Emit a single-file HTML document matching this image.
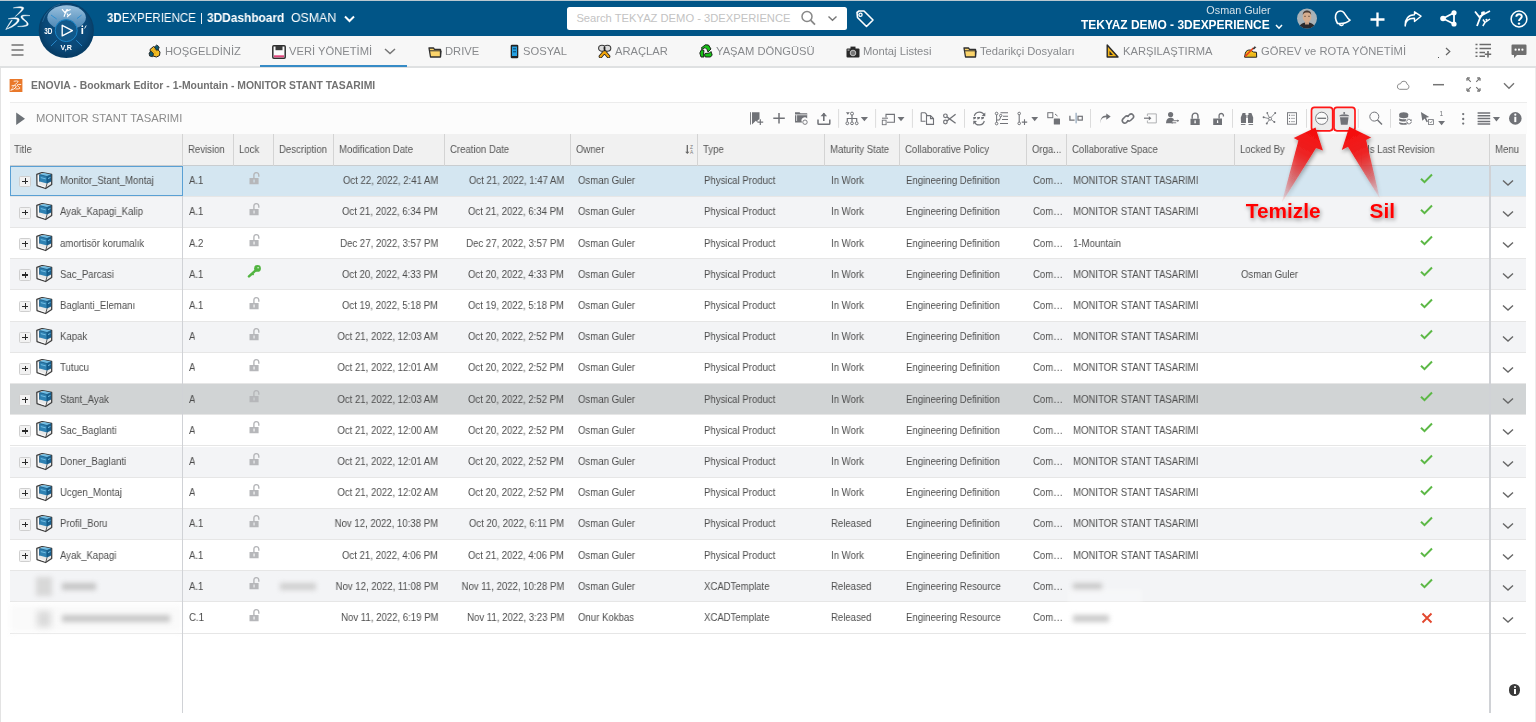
<!DOCTYPE html>
<html><head><meta charset="utf-8">
<style>
*{box-sizing:border-box}
html,body{margin:0;padding:0}
body{width:1536px;height:722px;overflow:hidden;position:relative;background:#fff;font-family:"Liberation Sans",sans-serif;}
.abs{position:absolute}
.brand{will-change:transform;top:9.4px;font-size:13px;color:#fff;white-space:nowrap;transform-origin:0 0}
#top{position:absolute;left:0;top:0;width:1536px;height:36px;background:#015587;border-top:1px solid #bac8d0}
#nav{position:absolute;left:0;top:36px;width:1536px;height:32px;background:#f7f7f7;border-bottom:2px solid #dfe1e2}
.nt{position:absolute;top:0;height:30px;line-height:30px;font-size:11.2px;color:#87898c;white-space:nowrap;will-change:transform}
.ni{position:absolute}
#panel{position:absolute;left:0;top:68px;width:1536px;height:654px;background:#fff;border-left:1.5px solid #e3e3e3}
#ptitle{will-change:transform;position:absolute;left:30px;top:11.6px;font-size:10.4px;font-weight:bold;color:#727272;white-space:nowrap}
#tb{position:absolute;left:9.6px;top:102px;width:1517px;height:31.5px;background:#fcfcfc;border-top:1px solid #ececec}
#tbtitle{will-change:transform;position:absolute;left:26.3px;top:9px;font-size:11.2px;color:#8c8c8c;white-space:nowrap}
#thead{position:absolute;left:9.6px;top:134.1px;width:1516.8px;height:31.6px;background:#f1f1f1;border-bottom:1px solid #c9cdd0}
.th{position:absolute;top:0;height:31.5px;border-left:1px solid #d4d4d4}
.th:first-child{border-left:none}
.th span{will-change:transform;position:absolute;left:4.9px;top:9.8px;font-size:10.4px;transform:scaleX(0.923);transform-origin:0 0;color:#555;white-space:nowrap}
.row{position:absolute;left:9.6px;width:1516.8px;height:31.2px;border-bottom:1px solid #e6e6e6}
.row .in{position:absolute;left:-9.6px;top:0;width:1536px;height:31.2px}
.row .c{position:absolute;top:9.5px;font-size:10.4px;color:#4d4d4d;white-space:nowrap;will-change:transform;transform:scaleX(0.923);transform-origin:0 0}
.row .c.r{transform-origin:100% 0}
.row .c.r{left:auto}
.row .ico{position:absolute}
.row .ico svg{display:block}
.row .blur{position:absolute}
.plus{position:absolute;width:11.3px;height:11.6px;background:#f2f2f2;border:1px solid #cfcfcf;border-radius:1.5px}
.plus:before{content:"";position:absolute;left:1.6px;top:3.9px;width:6.3px;height:1.25px;background:#2a2a2a}
.plus:after{content:"";position:absolute;left:4.15px;top:1.5px;width:1.25px;height:5.9px;background:#2a2a2a}
</style></head><body>
<div id="top">
  <svg class="abs" style="left:0;top:-2px" width="36" height="36" viewBox="0 0 36 36">
    <g fill="#fff" stroke="#fff" stroke-width="0.45" stroke-linejoin="round">
    <path d="M13.3 8.9 Q21.5 6.6 23.6 8.6 Q25 10.4 15.2 17.6 Q22 10.8 21.8 9.5 Q21 8.4 13.3 8.9 Z"/>
    <path d="M8.2 19.8 Q16.8 17.6 19 19.8 Q20.2 21.8 16.3 25.3 Q12.2 28.9 5.8 30.4 Q11.8 27.6 15 24.6 Q17.8 21.8 17.3 20.7 Q16.5 19.4 8.2 19.8 Z"/>
    <path d="M12.3 21.2 Q9.4 25.8 5.9 30.3 Q8.4 25.6 11.2 21.4 Z"/>
    <path d="M30 16.6 Q22.8 15.4 21.1 17 Q20 18.8 24.1 21.5 Q27.6 23.9 26.8 25.4 Q25.4 26.9 17.6 27.5 Q25.8 28 27.9 26.3 Q29.5 24.6 25.4 21.2 Q22 18.6 22.6 17.6 Q23.6 16.4 30 16.6 Z"/>
    </g>
  </svg>
  <div class="abs brand" style="left:107px;transform:scaleX(0.885)"><b>3D</b>EXPERIENCE</div>
  <div class="abs" style="left:201.2px;top:11.8px;width:1.1px;height:11.5px;background:#e8eef3"></div>
  <div class="abs brand" style="left:206.8px;transform:scaleX(0.915)"><b>3DDashboard</b></div>
  <div class="abs brand" style="left:291px;transform:scaleX(0.95)">OSMAN</div>
  <svg class="abs" style="left:344px;top:14px" width="11" height="8" viewBox="0 0 11 8"><path d="M1 1.5 L5.5 6 L10 1.5" fill="none" stroke="#fff" stroke-width="2"/></svg>
  <div class="abs" style="left:567.3px;top:5.6px;width:279.7px;height:23.3px;background:#fff;border-radius:2.5px"></div>
  <div class="abs" style="left:576.4px;top:11px;font-size:11.2px;color:#c3c3c3;white-space:nowrap">Search TEKYAZ DEMO - 3DEXPERIENCE</div>
  <svg class="abs" style="left:800px;top:9px" width="18" height="16" viewBox="0 0 18 16"><circle cx="7" cy="6.5" r="5" fill="none" stroke="#888" stroke-width="1.5"/><path d="M10.6 10.2 L15 14.6" stroke="#888" stroke-width="1.8"/></svg>
  <svg class="abs" style="left:827px;top:14px" width="11" height="7" viewBox="0 0 11 7"><path d="M1.5 1.5 L5.5 5.2 L9.5 1.5" fill="none" stroke="#777" stroke-width="1.4"/></svg>
  <svg class="abs" style="left:855px;top:9px" width="20" height="18" viewBox="0 0 20 18"><path d="M2 2.5 L2.5 7.5 L11.5 16.5 L18 10 L9 1 L4 1 Z" fill="none" stroke="#fff" stroke-width="1.6" stroke-linejoin="round"/><circle cx="5.5" cy="4.8" r="1.6" fill="none" stroke="#fff" stroke-width="1.3"/></svg>
  <div class="abs" style="right:265.4px;top:4.1px;font-size:10.2px;color:#d6e2ea;white-space:nowrap;transform-origin:100% 0;transform:scaleX(1.06)">Osman Guler</div>
  <div class="abs" style="left:1081px;top:16.9px;font-size:12.6px;font-weight:bold;color:#fff;white-space:nowrap;transform-origin:0 0;transform:scaleX(0.948)" id="tenant">TEKYAZ DEMO - 3DEXPERIENCE</div>
  <svg class="abs" style="left:1274.5px;top:23px" width="8" height="6" viewBox="0 0 8 6"><path d="M1 1 L4 4.2 L7 1" fill="none" stroke="#fff" stroke-width="1.5"/></svg>
  <svg class="abs" style="left:1296px;top:7px" width="22" height="22" viewBox="0 0 22 22"><defs><clipPath id="avc"><circle cx="11" cy="10.6" r="10"/></clipPath><filter id="avb"><feGaussianBlur stdDeviation="0.6"/></filter></defs><g clip-path="url(#avc)"><rect x="0" y="0" width="22" height="22" fill="#a8b2b8"/><g filter="url(#avb)"><path d="M2 22 C3 16 7 14.5 11 14.5 C15 14.5 19 16 20 22 Z" fill="#2a2b2d"/><rect x="9" y="12.5" width="4" height="4" fill="#c9a186"/><ellipse cx="11" cy="8.8" rx="4.3" ry="5.6" fill="#d6ad8e"/><path d="M6.8 7 C6.8 3.5 9 2.6 11 2.6 C13 2.6 15.2 3.5 15.2 7 C14.5 5.2 13 4.6 11 4.6 C9 4.6 7.5 5.2 6.8 7 Z" fill="#4a3a32"/><path d="M8 8.3 H10 M12 8.3 H14" stroke="#6a5040" stroke-width="0.8"/></g></g></svg>
  <svg class="abs" style="left:1333px;top:8px" width="19" height="19" viewBox="0 0 19 19"><path d="M4.5 14.5 C2.5 11 1.8 7 3.5 4.2 C5.2 1.5 9 1.2 11 3.8 C12.8 6.2 14 9 17 11.2 C14.5 13.5 9 15 4.5 14.5 Z" fill="none" stroke="#fff" stroke-width="1.6" stroke-linejoin="round"/><path d="M6.5 15 C7 17 9.5 17.3 10.5 15.3" fill="none" stroke="#fff" stroke-width="1.4"/></svg>
  <svg class="abs" style="left:1370px;top:10.5px" width="15" height="15" viewBox="0 0 15 15"><path d="M7.5 0.5 V14.5 M0.5 7.5 H14.5" stroke="#fff" stroke-width="2.3"/></svg>
  <svg class="abs" style="left:1403.5px;top:9.8px" width="18" height="16" viewBox="0 0 18 16"><path d="M1.2 15 C1.5 9.5 5 7 10.5 7.2 V10.5 L17 5.2 L10.5 0.8 V3.8 C4.5 3.8 0.8 8 1.2 15 Z" fill="none" stroke="#fff" stroke-width="1.4" stroke-linejoin="round"/></svg>
  <svg class="abs" style="left:1439.5px;top:9.2px" width="18" height="17" viewBox="0 0 18 17"><path d="M3 8.5 L14 2.8 L14 14 Z" fill="none" stroke="#fff" stroke-width="1.8" stroke-linejoin="round"/><circle cx="3" cy="8.5" r="2.8" fill="#fff"/><circle cx="14" cy="2.8" r="2.6" fill="#fff"/><circle cx="14" cy="14" r="2.6" fill="#fff"/></svg>
  <svg class="abs" style="left:1474px;top:9.2px" width="18" height="17" viewBox="0 0 18 17"><path d="M1 1.5 L6 8 L3 16" fill="none" stroke="#fff" stroke-width="1.8"/><path d="M6 8 L10.5 1.5" fill="none" stroke="#fff" stroke-width="1.8"/><path d="M5.5 6.5 L16 1" fill="none" stroke="#fff" stroke-width="1.6"/><circle cx="8.5" cy="3" r="1.5" fill="#fff"/><path d="M9 9.5 L11 12.5 L8.8 16 M11 12.5 L16 9" fill="none" stroke="#fff" stroke-width="1.5"/><circle cx="12.5" cy="9.8" r="1.1" fill="#fff"/></svg>
  <svg class="abs" style="left:1509.5px;top:8.5px" width="18" height="18" viewBox="0 0 18 18"><circle cx="9" cy="9" r="7.9" fill="none" stroke="#fff" stroke-width="1.5"/><path d="M6.3 6.8 C6.3 3.5 11.8 3.5 11.8 6.6 C11.8 8.6 9 8.8 9 11" fill="none" stroke="#fff" stroke-width="1.9"/><circle cx="9" cy="13.6" r="1.2" fill="#fff"/></svg>
</div>
<svg id="compass" class="abs" style="left:0;top:0;z-index:5" width="100" height="64" viewBox="0 0 100 64">
  <defs>
    <radialGradient id="cdisc" cx="0.5" cy="0.45" r="0.55"><stop offset="0" stop-color="#0c5184"/><stop offset="0.75" stop-color="#0a4877"/><stop offset="1" stop-color="#063b63"/></radialGradient>
    <linearGradient id="ccap" x1="0" y1="0" x2="0" y2="1"><stop offset="0" stop-color="#a2c8e4"/><stop offset="0.6" stop-color="#6a9fc8"/><stop offset="1" stop-color="#4f86b2"/></linearGradient>
  </defs>
  <circle cx="66.3" cy="30.4" r="27.6" fill="#083f68"/>
  <circle cx="66.3" cy="30.4" r="26.6" fill="url(#cdisc)"/>
  <path d="M42.5 22 A24 24 0 0 1 60 4.2" fill="none" stroke="#2f77a8" stroke-width="0.8" opacity="0.8"/>
  <ellipse cx="66.6" cy="17.6" rx="19.3" ry="12.3" fill="url(#ccap)" opacity="0.95"/>
  <circle cx="66.2" cy="30.6" r="11" fill="#11588a" stroke="#1c87c9" stroke-width="1"/>
  <path d="M62.2 25.3 L62.2 35.9 L72.4 30.6 Z" fill="none" stroke="#fff" stroke-width="1.35" stroke-linejoin="round"/>
  <path d="M51 15 L56.7 19 M81.6 15 L77 18.6 M51 46 L56.7 40.3 M82 46 L76.2 40.3" stroke="#2a8cd0" stroke-width="0.9"/>
  <text x="44.2" y="33.8" font-family="Liberation Sans" font-weight="bold" font-size="8.4" fill="#fff" textLength="8.2" lengthAdjust="spacingAndGlyphs">3D</text>
  <text x="60.6" y="50.2" font-family="Liberation Sans" font-weight="bold" font-size="8" fill="#fff" textLength="11.2" lengthAdjust="spacingAndGlyphs">V,R</text>
  <path d="M82.3 28 V34" stroke="#fff" stroke-width="1.7"/>
  <circle cx="82.3" cy="26.2" r="0.9" fill="#fff"/>
  <path d="M84.6 28.5 L86.2 25.5" stroke="#fff" stroke-width="0.9"/>
  <path d="M62 9.2 L65.3 13.2 L64 16.8 M65.3 13.2 L67.8 9.2 M64.6 12 L70.6 9.5 M67 13.5 L68.3 15.8 L67.2 17.2 M68.3 15.8 L71 13.6" fill="none" stroke="#fff" stroke-width="1.15"/>
  <circle cx="66.6" cy="10.3" r="1" fill="#fff"/>
</svg>
<div id="nav">
  <svg class="abs" style="left:11px;top:8px" width="13" height="12" viewBox="0 0 13 12"><path d="M0.5 1 H12.5 M0.5 6 H12.5 M0.5 11 H12.5" stroke="#747474" stroke-width="1.7"/></svg>
  <svg class="ni" style="left:144px;top:4px" width="22" height="22" viewBox="144 40 22 22"><path d="M150 49.5 L153.5 46.5 L157 48.5 L160 52 L159.5 55.5 L156.5 57 L153 56 L150.5 52.5 Z" fill="#f4bd22" stroke="#1e1e1e" stroke-width="1" stroke-linejoin="round"/><path d="M154.5 47 L156.8 44.9 L159.2 47 L158.2 50 L156.3 50.2 Z" fill="#0f5a6e" stroke="#1e1e1e" stroke-width="0.8"/><path d="M149 53 L151.3 51.2 L153.6 53.8 L152.4 56.8 L149.6 56 Z" fill="#0f5a6e" stroke="#1e1e1e" stroke-width="0.8"/><path d="M152 50 L156 53.5 M153.5 48.5 L157.5 52" stroke="#c98f10" stroke-width="0.6"/></svg>
  <div class="nt" style="left:165.2px">HOŞGELDİNİZ</div>
  <svg class="ni" style="left:271.8px;top:8.5px" width="14" height="14" viewBox="0 0 14 14"><rect x="0.8" y="0.8" width="12.4" height="12.4" rx="1" fill="#fafafa" stroke="#2f2f2f" stroke-width="1.5"/><rect x="3.5" y="1" width="7" height="4.2" fill="#3a3a3a"/><rect x="2" y="10.3" width="10" height="2" fill="#e0457b"/></svg>
  <div class="nt" style="left:288.9px">VERİ YÖNETİMİ</div>
  <svg class="ni" style="left:384px;top:12px" width="12" height="7" viewBox="0 0 12 7"><path d="M1 1 L6 5.5 L11 1" fill="none" stroke="#777" stroke-width="1.5"/></svg>
  <div class="abs" style="left:260.2px;top:28.5px;width:146.6px;height:2.2px;background:#368bc6"></div>
  <svg class="ni" style="left:427.5px;top:9.5px" width="14" height="12" viewBox="0 0 14 12"><path d="M1 2 L5.5 2 L6.5 3.3 L12.5 3.3 L12.5 11 L2.5 11 Z" fill="#fbd46b" stroke="#2f2f2f" stroke-width="1.3" stroke-linejoin="round"/><path d="M1 4.8 H13.2 L12.5 11" fill="none" stroke="#2f2f2f" stroke-width="1"/></svg>
  <div class="nt" style="left:444.6px">DRIVE</div>
  <svg class="ni" style="left:509.5px;top:7.5px" width="9" height="15" viewBox="0 0 9 15"><rect x="0.7" y="0.7" width="7.6" height="13.6" rx="1.3" fill="#222"/><rect x="2" y="2.5" width="5" height="9.5" fill="#27a0e0"/><rect x="3" y="4" width="3" height="1.4" fill="#0e5f8f"/><rect x="3" y="7" width="3" height="1.4" fill="#0e5f8f"/></svg>
  <div class="nt" style="left:522.9px">SOSYAL</div>
  <svg class="ni" style="left:596px;top:6px" width="18" height="16" viewBox="0 0 18 16"><path d="M4.5 14.5 L10.5 7.5 M12.5 14.5 L6.5 7.5" stroke="#1e1e1e" stroke-width="3.6" stroke-linecap="round"/><path d="M4.5 14.5 L10.5 7.5 M12.5 14.5 L6.5 7.5" stroke="#f0a30a" stroke-width="2.1" stroke-linecap="round"/><ellipse cx="6" cy="6.2" rx="3.4" ry="3" fill="#dcdcdc" stroke="#3a3a3a" stroke-width="1.1"/><ellipse cx="11.4" cy="6.2" rx="3.4" ry="3" fill="#dcdcdc" stroke="#3a3a3a" stroke-width="1.1"/><path d="M8.7 5 V9" stroke="#1e1e1e" stroke-width="1.4"/></svg>
  <div class="nt" style="left:615px">ARAÇLAR</div>
  <svg class="ni" style="left:699px;top:8px" width="14" height="14" viewBox="0 0 14 14"><path d="M6.3 0.8 L9.5 1 L12 5 L9 8 L8 5.5 L6 3.5 L3.8 5.2 L2.2 4 Z" fill="#16c216" stroke="#111" stroke-width="0.9" stroke-linejoin="round"/><path d="M0.8 9 L2.5 5.5 L5 6.5 L4.5 10 L5 13 L2 13 Z" fill="#16c216" stroke="#111" stroke-width="0.9" stroke-linejoin="round"/><path d="M6 9.5 L10.5 9 L12 7.5 L13.2 11 L11.5 13 L6.3 13 L5.5 11 Z" fill="#16c216" stroke="#111" stroke-width="0.9" stroke-linejoin="round"/></svg>
  <div class="nt" style="left:715.6px">YAŞAM DÖNGÜSÜ</div>
  <svg class="ni" style="left:845.5px;top:9.5px" width="14" height="12" viewBox="0 0 14 12"><rect x="0.5" y="2.5" width="13" height="9" rx="1" fill="#2a2a2a"/><rect x="4.5" y="0.6" width="5" height="2.4" fill="#2a2a2a"/><circle cx="7" cy="7" r="2.8" fill="#777" stroke="#ddd" stroke-width="0.8"/><rect x="1.5" y="3.5" width="2" height="1.2" fill="#aaa"/></svg>
  <div class="nt" style="left:863.3px">Montaj Listesi</div>
  <svg class="ni" style="left:962.5px;top:9.5px" width="14" height="12" viewBox="0 0 14 12"><path d="M1 2 L5.5 2 L6.5 3.3 L12.5 3.3 L12.5 11 L2.5 11 Z" fill="#fbd46b" stroke="#2f2f2f" stroke-width="1.3" stroke-linejoin="round"/><path d="M1 4.8 H13.2 L12.5 11" fill="none" stroke="#2f2f2f" stroke-width="1"/></svg>
  <div class="nt" style="left:980.2px">Tedarikçi Dosyaları</div>
  <svg class="ni" style="left:1105.5px;top:8px" width="13" height="14" viewBox="0 0 13 14"><path d="M1.2 1 L12 13 L1.2 13 Z" fill="#f2b418" stroke="#2a2a2a" stroke-width="1.4" stroke-linejoin="round"/><path d="M3.5 7 L7 11 L3.5 11 Z" fill="#2a2a2a"/></svg>
  <div class="nt" style="left:1122.6px">KARŞILAŞTIRMA</div>
  <svg class="ni" style="left:1240px;top:4px" width="22" height="22" viewBox="1240 40 22 22"><path d="M1244.6 57.2 L1245.3 53.2 C1246 50.6 1248 49.8 1250.5 50 L1253.5 52 L1256.5 52.3 L1256.7 57.2 Z" fill="#f5c21f" stroke="#1e1e1e" stroke-width="1" stroke-linejoin="round"/><path d="M1245.2 56.4 L1253.4 48" stroke="#e8421a" stroke-width="1.7"/><path d="M1253 48.4 L1255 46.6 L1255.8 47.4 L1253.8 49.2 Z" fill="#333" stroke="#222" stroke-width="0.6"/><path d="M1248.5 55 H1255.5" stroke="#d9a010" stroke-width="0.6"/></svg>
  <div class="nt" style="left:1261.4px">GÖREV ve ROTA YÖNETİMİ</div>
  <div class="abs" style="left:1437.8px;top:20.5px;width:1.6px;height:1.6px;background:#555"></div>
  <svg class="ni" style="left:1445px;top:11px" width="6" height="9" viewBox="0 0 6 9"><path d="M1 1 L4.8 4.5 L1 8" fill="none" stroke="#666" stroke-width="1.2"/></svg>
  <svg class="ni" style="left:1475px;top:6.5px" width="17" height="15" viewBox="0 0 17 15"><path d="M0.5 1.5 H2.5 M4.5 1.5 H16 M0.5 5.5 H2.5 M4.5 5.5 H16 M0.5 9.5 H2.5 M4.5 9.5 H10 M0.5 13.2 H2.5 M4.5 13.2 H10 M13 8 V14.5 M9.8 11.2 H16.2" stroke="#6b6b6b" stroke-width="1.6"/></svg>
  <svg class="ni" style="left:1511px;top:7.5px" width="16" height="15" viewBox="0 0 16 15"><path d="M1.5 0.5 H14.5 A1 1 0 0 1 15.5 1.5 V10 A1 1 0 0 1 14.5 11 H6 L3 14 V11 H1.5 A1 1 0 0 1 0.5 10 V1.5 A1 1 0 0 1 1.5 0.5 Z" fill="#6f6f6f"/><circle cx="4.6" cy="5.7" r="1.1" fill="#fff"/><circle cx="8" cy="5.7" r="1.1" fill="#fff"/><circle cx="11.4" cy="5.7" r="1.1" fill="#fff"/></svg>
</div>
<div id="panel">
  <div id="ptitle">ENOVIA - Bookmark Editor - 1-Mountain - MONITOR STANT TASARIMI</div>
</div>
<div id="tb"><div id="tbtitle">MONITOR STANT TASARIMI</div></div>
<svg class="abs" style="left:0;top:66px;z-index:2" width="1536" height="70" viewBox="0 66 1536 70">
<g fill="none" stroke="#707277">
  <!-- panel header right icons -->
  <path d="M1399.5 89.3 H1407 A2.6 2.6 0 0 0 1407.2 84.3 A3.4 3.4 0 0 0 1400.5 83.8 A2.8 2.8 0 0 0 1399.5 89.3 Z" stroke="#8c8c8c" stroke-width="1"/>
  <path d="M1433 84.7 H1444" stroke-width="1.5" stroke="#747474"/>
  <path d="M1467.5 78.5 L1470.8 81.8 M1479.5 78.5 L1476.2 81.8 M1467.5 90.5 L1470.8 87.2 M1479.5 90.5 L1476.2 87.2" stroke-width="1.1" stroke="#747474"/>
  <path d="M1467 78 h2.8 M1467 78 v2.8 M1480 78 h-2.8 M1480 78 v2.8 M1467 91 h2.8 M1467 91 v-2.8 M1480 91 h-2.8 M1480 91 v-2.8" stroke-width="1.3" stroke="#747474"/>
  <path d="M1504 83.3 L1509 88.3 L1514 83.3" stroke-width="1.4" stroke="#747474"/>
</g>
<!-- orange logo -->
<rect x="9.6" y="79" width="12.8" height="13" fill="#e9782a"/>
<g transform="translate(10.6 80.2) scale(0.42) translate(-5.3 -6.2)" fill="none" stroke="#fff" stroke-linecap="round">
    <path d="M13.6 8.6 Q21.5 7.2 23.2 8.9 Q24.4 10.5 14.9 17.3" stroke-width="1.9"/>
    <path d="M8.5 19.4 Q16.5 18.2 18.5 20 Q19.6 21.6 16 25 Q12 28.6 6.3 30" stroke-width="2.1"/>
    <path d="M11.9 21.3 Q9.2 25.6 6.4 29.8" stroke-width="1.3"/>
    <path d="M29.6 16.3 Q22.5 15.8 21 17.3 Q20.2 18.8 24.2 21.3 Q28.3 24 26.9 25.9 Q25.2 27.3 17.8 27.2" stroke-width="2"/>
</g>
<!-- toolbar triangle -->
<path d="M16.2 112.6 L25 118.75 L16.2 124.9 Z" fill="#6d7277"/>
<!-- separators -->
<g stroke="#dcdcdc" stroke-width="1">
<path d="M838.6 109 V127.8 M875.6 109 V127.8 M912.4 109 V127.8 M964.5 109 V127.8 M1090.5 109 V127.8 M1232.5 109 V127.8 M1306.5 109 V127.8 M1358.3 109 V127.8 M1390.5 109 V127.8"/>
</g>
<g fill="#707277" stroke="none">
  <!-- bookmark + -->
  <rect x="750.1" y="112.2" width="0.9" height="12.4"/>
  <path d="M752 112.2 H759.5 V119 L757.5 120.5 V122.5 L755.8 120.7 L752 124.6 Z"/>
  <path d="M760.3 119.2 V125 M757.5 122.1 H763.2" stroke="#707277" stroke-width="1.2"/>
  <!-- plus -->
  <path d="M779 113 V123.6 M773.3 118.3 H784.8" stroke="#707277" stroke-width="1.5"/>
  <!-- folder -->
  <path d="M795 112.2 H799.5 L800.5 113.3 H807.2 V118.5 A3 3 0 0 0 802.3 122.6 H795 Z"/>
  <path d="M796.6 114.8 V121 M795 114.8 H807" stroke="#fff" stroke-width="0.7"/>
  <circle cx="805" cy="122.2" r="2.2" fill="none" stroke="#707277" stroke-width="0.9"/>
  <!-- upload -->
  <path d="M823.8 113 V121" stroke="#707277" stroke-width="1.6"/>
  <path d="M820.5 116.3 L823.8 112.8 L827.1 116.3 Z"/>
  <path d="M818 119.5 V123.5 Q818 124.3 818.8 124.3 H829 Q829.8 124.3 829.8 123.5 V119.5" fill="none" stroke="#707277" stroke-width="1.5"/>
  <!-- tree + dd -->
  <path d="M845.9 112.2 H849.8 L847.85 114.8 Z"/>
  <circle cx="852" cy="113.6" r="1.5" fill="none" stroke="#707277" stroke-width="1"/>
  <path d="M852 115.1 V118.5 M847.3 121.8 V118.5 H856.7 V121.8 M852 118.5 V121.8" fill="none" stroke="#707277" stroke-width="1.2"/>
  <circle cx="847.3" cy="123.3" r="1.4" fill="none" stroke="#707277" stroke-width="1"/>
  <circle cx="852" cy="123.3" r="1.4" fill="none" stroke="#707277" stroke-width="1"/>
  <circle cx="856.7" cy="123.3" r="1.4" fill="none" stroke="#707277" stroke-width="1"/>
  <path d="M860.8 117 H868 L864.4 121.3 Z"/>
  <!-- rect + dd -->
  <path d="M886 117.5 V114.4 H894.4 V122.3 H887" fill="none" stroke="#707277" stroke-width="1.1"/>
  <path d="M882 118.2 H888" stroke="#707277" stroke-width="1"/>
  <rect x="882.3" y="120.2" width="3.8" height="4.5" fill="none" stroke="#707277" stroke-width="0.9"/>
  <path d="M897.6 117 H904.5 L901 121.3 Z"/>
  <!-- copy -->
  <path d="M921.2 112.7 H925 L926.6 114.3 V116 M921.2 112.7 V121.2 H925.5" fill="none" stroke="#707277" stroke-width="1.1"/>
  <path d="M926.5 115.6 H930.5 L933.5 118.6 V124.4 H926.5 Z M930.5 115.6 V118.6 H933.5" fill="none" stroke="#707277" stroke-width="1.1"/>
  <!-- scissors -->
  <circle cx="945.4" cy="115.8" r="1.8" fill="none" stroke="#707277" stroke-width="1.2"/>
  <circle cx="945.4" cy="122" r="1.8" fill="none" stroke="#707277" stroke-width="1.2"/>
  <path d="M946.9 116.9 L955.6 123.2 M946.9 120.9 L955.6 114.3" stroke="#707277" stroke-width="1.3"/>
  <!-- sync -->
  <path d="M974.3 116 A5.3 5.3 0 0 1 984.3 115.3 M984.3 121 A5.3 5.3 0 0 1 974.3 121.7" fill="none" stroke="#707277" stroke-width="1.2"/>
  <path d="M985.3 112.5 L985.3 116.3 L981.6 116 Z M973.3 124.5 L973.3 120.7 L977 121 Z"/>
  <path d="M973.5 117.2 L975.5 118.5 L973.5 119.8 Z M977.5 117.2 L979.5 118.5 L977.5 119.8 Z M981.5 117.2 L983.5 118.5 L981.5 119.8 Z"/>
  <path d="M973.3 117.7 H976 M977.3 117.7 H980 M981.3 117.7 H984" stroke="#707277" stroke-width="1.5"/>
  <!-- tree list -->
  <circle cx="996.6" cy="113.5" r="1.3" fill="none" stroke="#707277" stroke-width="1"/>
  <circle cx="996.6" cy="123.6" r="1.3" fill="none" stroke="#707277" stroke-width="1"/>
  <circle cx="1000.7" cy="115.6" r="1.2" fill="none" stroke="#707277" stroke-width="1"/>
  <path d="M996.6 114.8 V122.3 M996.6 120 H999.5 L1000.7 116.8" fill="none" stroke="#707277" stroke-width="1"/>
  <path d="M1000.5 112.8 H1008 M1003 116.2 H1008 M1002 119.5 H1008 M1000 123.5 H1008" stroke="#707277" stroke-width="1.1"/>
  <!-- path + dd -->
  <circle cx="1019.2" cy="113.5" r="1.3" fill="none" stroke="#707277" stroke-width="1"/>
  <circle cx="1019.2" cy="123.4" r="1.3" fill="none" stroke="#707277" stroke-width="1"/>
  <path d="M1019.2 114.8 V122.1" stroke="#707277" stroke-width="1.1"/>
  <path d="M1024.5 119.3 V124.9 M1021.8 122.1 H1027.2" stroke="#707277" stroke-width="1.1"/>
  <path d="M1031.3 117 H1038.1 L1034.7 121.3 Z"/>
  <!-- square move -->
  <rect x="1047.8" y="112.7" width="5" height="5" fill="none" stroke="#707277" stroke-width="1"/>
  <path d="M1055 114 L1057.5 116" stroke="#707277" stroke-width="1"/>
  <rect x="1053.8" y="118.4" width="6.2" height="6.2" rx="0.6"/>
  <!-- split -->
  <path d="M1069.9 115.8 V120.2 H1074.6" fill="none" stroke="#707277" stroke-width="1.3"/>
  <path d="M1076.1 112.8 V123.3" stroke="#6c87a3" stroke-width="0.9"/>
  <rect x="1078" y="116.3" width="4.3" height="3.8" fill="none" stroke="#707277" stroke-width="1.2"/>
  <!-- share arrow -->
  <path d="M1100.3 123.3 C1100.5 119 1102.5 117 1106.3 117.3 V119.8 L1110.7 116.6 L1106.3 113.6 V115.6 C1102 115.6 1100.3 119 1100.3 123.3 Z"/>
  <!-- link -->
  <path d="M1127.3 116.8 L1129.6 114.5 A2.5 2.5 0 0 1 1133.1 118 L1130.8 120.3 A2.5 2.5 0 0 1 1127.3 120.3" fill="none" stroke="#707277" stroke-width="1.6"/>
  <path d="M1128.6 120.3 L1126.3 122.6 A2.5 2.5 0 0 1 1122.8 119.1 L1125.1 116.8 A2.5 2.5 0 0 1 1128.6 116.8" fill="none" stroke="#707277" stroke-width="1.6"/>
  <!-- enter -->
  <path d="M1147.4 116 V113.9 H1156.3 V122.9 H1147.4 V120.5" fill="none" stroke="#a7a9ac" stroke-width="0.9"/>
  <path d="M1144 118.2 H1149.5" stroke="#707277" stroke-width="1.2"/>
  <path d="M1148.8 115.9 L1151.4 118.2 L1148.8 120.5 Z"/>
  <!-- user transfer -->
  <circle cx="1170.6" cy="114.6" r="2.6"/>
  <path d="M1166 123.2 C1166 119.5 1168 117.7 1170.6 117.7 C1172.3 117.7 1173.4 118.3 1174 119.2 L1171.2 123.2 Z"/>
  <path d="M1172.5 120.7 H1178.6 M1171.5 122.8 H1176.2" stroke="#707277" stroke-width="0.9"/>
  <path d="M1177.3 119.4 L1179.1 120.7 L1177.3 122 Z M1172.5 121.5 L1170.9 122.8 L1172.5 124.1 Z"/>
  <!-- lock -->
  <path d="M1192.2 118.7 V116 A2.9 2.9 0 0 1 1198 116 V118.7" fill="none" stroke="#707277" stroke-width="1.4"/>
  <path d="M1190.5 118.7 H1199.7 V124.9 H1190.5 Z M1194.6 120.3 L1195.6 120.3 L1195.9 123.3 L1194.3 123.3 Z" fill-rule="evenodd"/>
  <!-- unlock -->
  <path d="M1219.1 118.5 V115 A2.3 2.3 0 0 1 1223.4 115 V116.5" fill="none" stroke="#707277" stroke-width="1.3"/>
  <path d="M1213.2 118.4 H1222 V124.9 H1213.2 Z M1217.1 120.2 L1218.1 120.2 L1218.3 123 L1216.9 123 Z" fill-rule="evenodd"/>
  <!-- binoculars -->
  <path d="M1242.6 113 H1245.5 V115 H1246.5 V118 H1246 V123 H1241 L1240.8 117.5 Z M1251.4 113 H1248.5 V115 H1247.5 V118 H1248 V123 H1253 L1253.2 117.5 Z"/>
  <rect x="1240.9" y="124" width="4.5" height="0.9"/>
  <rect x="1248.6" y="124" width="4.5" height="0.9"/>
  <!-- network -->
  <circle cx="1270.1" cy="118.7" r="1.5" fill="none" stroke="#707277" stroke-width="0.9"/>
  <path d="M1269.2 117.5 L1267.3 113.2 M1271 117.5 L1275 113.2 M1268.6 118.5 L1263.8 117.4 M1269.2 119.9 L1266.8 123.4 M1271.2 119.6 L1274.3 122" stroke="#707277" stroke-width="0.8"/>
  <circle cx="1267.3" cy="112.9" r="0.9"/><circle cx="1275.2" cy="113" r="1"/><circle cx="1263.6" cy="117.3" r="1"/><circle cx="1266.8" cy="123.5" r="1"/><circle cx="1274.4" cy="122" r="1"/>
  <!-- list -->
  <rect x="1287.5" y="112.7" width="9" height="11.5" fill="none" stroke="#707277" stroke-width="0.9"/>
  <circle cx="1289.5" cy="115.3" r="0.7"/><circle cx="1289.5" cy="118.4" r="0.7"/><circle cx="1289.5" cy="121.6" r="0.7"/>
  <path d="M1291 115.3 H1295 M1291 118.4 H1295 M1291 121.6 H1295" stroke="#a0a2a5" stroke-width="0.9"/>
  <!-- red boxes bg -->
  <rect x="1311.5" y="107.4" width="20.6" height="23.2" rx="2.5" fill="#ececec"/>
  <rect x="1334" y="107.4" width="20.9" height="23.2" rx="2.5" fill="#ececec"/>
  <!-- minus circle -->
  <circle cx="1321.7" cy="118.3" r="6.1" fill="#fafafa" stroke="#707277" stroke-width="0.9"/>
  <path d="M1317.4 118.3 H1326.1" stroke="#707277" stroke-width="1.3"/>
  <!-- trash -->
  <path d="M1339.2 116.3 C1339.2 113.5 1349.3 113.5 1349.3 116.3 Z"/>
  <circle cx="1344.2" cy="112.9" r="1"/>
  <path d="M1340 117.2 H1348.5 L1347.6 124.8 H1340.9 Z"/>
  <!-- search -->
  <circle cx="1374.3" cy="116.6" r="4.5" fill="none" stroke="#707277" stroke-width="1"/>
  <path d="M1377.5 120 L1382 124.4" stroke="#707277" stroke-width="1.4"/>
  <!-- db -->
  <path d="M1399.2 114.3 C1399.2 111.5 1408.2 111.5 1408.2 114.3 V116.6 C1408.2 118.8 1399.2 118.8 1399.2 116.6 Z"/>
  <path d="M1399.2 118.2 C1400.5 119.6 1406.9 119.6 1408.2 118.2 V120.5 C1406.9 121.9 1400.5 121.9 1399.2 120.5 Z"/>
  <path d="M1399.2 122.1 C1400.5 123.5 1406.9 123.5 1408.2 122.1 V123.2 C1408.2 125.4 1399.2 125.4 1399.2 123.2 Z"/>
  <circle cx="1409" cy="121.6" r="3.3" fill="#fff"/>
  <path d="M1406.6 121.6 A2.4 2.4 0 0 1 1411 120.4 M1411.4 121.6 A2.4 2.4 0 0 1 1407 122.8" fill="none" stroke="#707277" stroke-width="0.9"/>
  <path d="M1411.6 119 V121 H1409.8 Z M1406.4 124.2 V122.2 H1408.2 Z"/>
  <!-- cursor -->
  <path d="M1420.9 112.1 L1429.2 116.9 L1426 117.8 L1428 121.6 L1426.6 122.3 L1424.7 118.5 L1422.3 120.7 Z"/>
  <rect x="1428.6" y="119.6" width="4.8" height="4.9" fill="none" stroke="#707277" stroke-width="0.8"/>
  <path d="M1429.6 121.8 L1430.7 123 L1432.5 120.5" fill="none" stroke="#707277" stroke-width="0.7"/>
  <path d="M1438.2 120.9 H1445 L1441.6 125.2 Z"/>
  <text x="1439.5" y="116" font-family="Liberation Sans" font-size="6.6" fill="#707277">1</text>
  <!-- dots -->
  <circle cx="1463.2" cy="114.1" r="1.15"/><circle cx="1463.2" cy="119" r="1.15"/><circle cx="1463.2" cy="123.6" r="1.15"/>
  <!-- lines dd -->
  <path d="M1477.6 113 H1490.2 M1477.6 115.8 H1490.2 M1477.6 118.6 H1490.2 M1477.6 121.4 H1490.2 M1477.6 124.1 H1490.2" stroke="#707277" stroke-width="1.5"/>
  <path d="M1492.9 116.9 H1500 L1496.45 121.5 Z"/>
  <!-- info -->
  <circle cx="1515.3" cy="118.4" r="6.3"/>
  <rect x="1514.3" y="116.8" width="2" height="5.3" fill="#fff"/>
  <circle cx="1515.3" cy="114.7" r="1.1" fill="#fff"/>
</g>
<!-- red highlight boxes -->
<rect x="1311.5" y="107.4" width="21.2" height="23.4" rx="3" fill="none" stroke="#ff1616" stroke-width="1.7"/>
<rect x="1334" y="107.4" width="21" height="23.4" rx="3" fill="none" stroke="#ff1616" stroke-width="1.7"/>
</svg>
<svg class="abs" style="left:680px;top:140px;z-index:3" width="20" height="20" viewBox="0 0 20 20"><path d="M7.3 5 V12.5" stroke="#666" stroke-width="1.3"/><path d="M5.2 11.8 H9.4 L7.3 14 Z" fill="#666"/><text x="10" y="9" font-family="Liberation Sans" font-size="4.8" fill="#777">Z</text><text x="9.9" y="14.3" font-family="Liberation Sans" font-size="4.8" fill="#777">A</text></svg>
<div id="thead"><div class="th" style="left:-0.50px;width:173.00px"><span>Title</span></div><div class="th" style="left:172.50px;width:50.80px"><span>Revision</span></div><div class="th" style="left:223.30px;width:40.00px"><span>Lock</span></div><div class="th" style="left:263.30px;width:59.90px"><span>Description</span></div><div class="th" style="left:323.20px;width:111.10px"><span>Modification Date</span></div><div class="th" style="left:434.30px;width:126.20px"><span>Creation Date</span></div><div class="th" style="left:560.50px;width:126.90px"><span>Owner</span></div><div class="th" style="left:687.40px;width:127.10px"><span>Type</span></div><div class="th" style="left:814.50px;width:75.00px"><span>Maturity State</span></div><div class="th" style="left:889.50px;width:127.10px"><span>Collaborative Policy</span></div><div class="th" style="left:1016.60px;width:39.80px"><span>Orga...</span></div><div class="th" style="left:1056.40px;width:168.25px"><span>Collaborative Space</span></div><div class="th" style="left:1224.65px;width:127.25px"><span>Locked By</span></div><div class="th" style="left:1351.90px;width:128.00px"><span>Is Last Revision</span></div><div class="th" style="left:1479.90px;width:36.40px"><span>Menu</span></div></div>
<div id="tbody"><div class="row" style="top:165.70px;background:#d4e6f1"><div class="in"><div class="plus" style="left:19.4px;top:10.2px"></div><div class="ico" style="left:36.4px;top:6.2px"><svg width="17" height="18" viewBox="0 0 17 18"><path d="M0.8 2.4 L6 0.5 L15.7 2.4 L15.7 12.5 L9.6 16.5 L1 13.6 Z" fill="#e9e9e9" stroke="#3c3c3c" stroke-width="1.25" stroke-linejoin="round"/><path d="M2.4 3.6 V12.7 L9.4 15.1" fill="none" stroke="#fbfbfb" stroke-width="1"/><path d="M3.6 2.6 L7.6 1.1 L15.2 2.5 L11 4.5 Z" fill="#72bde3"/><path d="M3.6 2.6 L11 4.5 L11 11.6 L3.6 9.6 Z" fill="#2f82b3"/><path d="M11 4.5 L15.2 2.5 L15.2 9.6 L11 11.6 Z" fill="#175f8e"/><path d="M4.8 5.6 L9.8 6.9 M12 6.6 L14.4 5.5" stroke="#72bde3" stroke-width="1"/><path d="M3.6 2.6 L11 4.5 L15.2 2.5 M11 4.5 V11.6 M3.6 2.6 V9.6" fill="none" stroke="#0f5480" stroke-width="0.8"/><path d="M11 11.6 L9.8 16.2" stroke="#4a4a4a" stroke-width="0.9"/></svg></div><div class="c" style="left:60px">Monitor_Stant_Montaj</div><div class="c" style="left:188.6px">A.1</div><div class="ico" style="left:248.5px;top:6px"><svg width="12" height="13" viewBox="0 0 12 13"><path d="M0.5 5.9 H9.6 V12.2 H0.5 Z M4.5 7.6 H5.6 V10.6 H4.5 Z" fill="#b6b7ba" fill-rule="evenodd"/><path d="M4.9 5.9 V3.1 A2.45 2.45 0 0 1 9.8 3.1 V4.7" fill="none" stroke="#b6b7ba" stroke-width="1.4"/></svg></div><div class="c r" style="right:1097.9px">Oct 22, 2022, 2:41 AM</div><div class="c r" style="right:971.8px">Oct 21, 2022, 1:47 AM</div><div class="c" style="left:578.0px">Osman Guler</div><div class="c" style="left:704.0px">Physical Product</div><div class="c" style="left:831.1px">In Work</div><div class="c" style="left:906.1px">Engineering Definition</div><div class="c" style="left:1033.2px">Com…</div><div class="c" style="left:1073.0px">MONITOR STANT TASARIMI</div><div class="ico" style="left:1420px;top:7.2px"><svg width="13" height="11" viewBox="0 0 13 11"><path d="M1 5.8 L4.5 9.2 L12 1.5" fill="none" stroke="#5cb846" stroke-width="2"/></svg></div><div class="ico" style="left:1502px;top:13px"><svg width="12" height="8" viewBox="0 0 12 8"><path d="M1 1.5 L6 6 L11 1.5" fill="none" stroke="#666" stroke-width="1.4"/></svg></div></div></div><div class="row" style="top:196.90px;background:#f3f4f6"><div class="in"><div class="plus" style="left:19.4px;top:10.2px"></div><div class="ico" style="left:36.4px;top:6.2px"><svg width="17" height="18" viewBox="0 0 17 18"><path d="M0.8 2.4 L6 0.5 L15.7 2.4 L15.7 12.5 L9.6 16.5 L1 13.6 Z" fill="#e9e9e9" stroke="#3c3c3c" stroke-width="1.25" stroke-linejoin="round"/><path d="M2.4 3.6 V12.7 L9.4 15.1" fill="none" stroke="#fbfbfb" stroke-width="1"/><path d="M3.6 2.6 L7.6 1.1 L15.2 2.5 L11 4.5 Z" fill="#72bde3"/><path d="M3.6 2.6 L11 4.5 L11 11.6 L3.6 9.6 Z" fill="#2f82b3"/><path d="M11 4.5 L15.2 2.5 L15.2 9.6 L11 11.6 Z" fill="#175f8e"/><path d="M4.8 5.6 L9.8 6.9 M12 6.6 L14.4 5.5" stroke="#72bde3" stroke-width="1"/><path d="M3.6 2.6 L11 4.5 L15.2 2.5 M11 4.5 V11.6 M3.6 2.6 V9.6" fill="none" stroke="#0f5480" stroke-width="0.8"/><path d="M11 11.6 L9.8 16.2" stroke="#4a4a4a" stroke-width="0.9"/></svg></div><div class="c" style="left:60px">Ayak_Kapagi_Kalip</div><div class="c" style="left:188.6px">A.1</div><div class="ico" style="left:248.5px;top:6px"><svg width="12" height="13" viewBox="0 0 12 13"><path d="M0.5 5.9 H9.6 V12.2 H0.5 Z M4.5 7.6 H5.6 V10.6 H4.5 Z" fill="#b6b7ba" fill-rule="evenodd"/><path d="M4.9 5.9 V3.1 A2.45 2.45 0 0 1 9.8 3.1 V4.7" fill="none" stroke="#b6b7ba" stroke-width="1.4"/></svg></div><div class="c r" style="right:1097.9px">Oct 21, 2022, 6:34 PM</div><div class="c r" style="right:971.8px">Oct 21, 2022, 6:34 PM</div><div class="c" style="left:578.0px">Osman Guler</div><div class="c" style="left:704.0px">Physical Product</div><div class="c" style="left:831.1px">In Work</div><div class="c" style="left:906.1px">Engineering Definition</div><div class="c" style="left:1033.2px">Com…</div><div class="c" style="left:1073.0px">MONITOR STANT TASARIMI</div><div class="ico" style="left:1420px;top:7.2px"><svg width="13" height="11" viewBox="0 0 13 11"><path d="M1 5.8 L4.5 9.2 L12 1.5" fill="none" stroke="#5cb846" stroke-width="2"/></svg></div><div class="ico" style="left:1502px;top:13px"><svg width="12" height="8" viewBox="0 0 12 8"><path d="M1 1.5 L6 6 L11 1.5" fill="none" stroke="#666" stroke-width="1.4"/></svg></div></div></div><div class="row" style="top:228.10px;background:#ffffff"><div class="in"><div class="plus" style="left:19.4px;top:10.2px"></div><div class="ico" style="left:36.4px;top:6.2px"><svg width="17" height="18" viewBox="0 0 17 18"><path d="M0.8 2.4 L6 0.5 L15.7 2.4 L15.7 12.5 L9.6 16.5 L1 13.6 Z" fill="#e9e9e9" stroke="#3c3c3c" stroke-width="1.25" stroke-linejoin="round"/><path d="M2.4 3.6 V12.7 L9.4 15.1" fill="none" stroke="#fbfbfb" stroke-width="1"/><path d="M3.6 2.6 L7.6 1.1 L15.2 2.5 L11 4.5 Z" fill="#72bde3"/><path d="M3.6 2.6 L11 4.5 L11 11.6 L3.6 9.6 Z" fill="#2f82b3"/><path d="M11 4.5 L15.2 2.5 L15.2 9.6 L11 11.6 Z" fill="#175f8e"/><path d="M4.8 5.6 L9.8 6.9 M12 6.6 L14.4 5.5" stroke="#72bde3" stroke-width="1"/><path d="M3.6 2.6 L11 4.5 L15.2 2.5 M11 4.5 V11.6 M3.6 2.6 V9.6" fill="none" stroke="#0f5480" stroke-width="0.8"/><path d="M11 11.6 L9.8 16.2" stroke="#4a4a4a" stroke-width="0.9"/></svg></div><div class="c" style="left:60px">amortisör korumalık</div><div class="c" style="left:188.6px">A.2</div><div class="ico" style="left:248.5px;top:6px"><svg width="12" height="13" viewBox="0 0 12 13"><path d="M0.5 5.9 H9.6 V12.2 H0.5 Z M4.5 7.6 H5.6 V10.6 H4.5 Z" fill="#b6b7ba" fill-rule="evenodd"/><path d="M4.9 5.9 V3.1 A2.45 2.45 0 0 1 9.8 3.1 V4.7" fill="none" stroke="#b6b7ba" stroke-width="1.4"/></svg></div><div class="c r" style="right:1097.9px">Dec 27, 2022, 3:57 PM</div><div class="c r" style="right:971.8px">Dec 27, 2022, 3:57 PM</div><div class="c" style="left:578.0px">Osman Guler</div><div class="c" style="left:704.0px">Physical Product</div><div class="c" style="left:831.1px">In Work</div><div class="c" style="left:906.1px">Engineering Definition</div><div class="c" style="left:1033.2px">Com…</div><div class="c" style="left:1073.0px">1-Mountain</div><div class="ico" style="left:1420px;top:7.2px"><svg width="13" height="11" viewBox="0 0 13 11"><path d="M1 5.8 L4.5 9.2 L12 1.5" fill="none" stroke="#5cb846" stroke-width="2"/></svg></div><div class="ico" style="left:1502px;top:13px"><svg width="12" height="8" viewBox="0 0 12 8"><path d="M1 1.5 L6 6 L11 1.5" fill="none" stroke="#666" stroke-width="1.4"/></svg></div></div></div><div class="row" style="top:259.30px;background:#f3f4f6"><div class="in"><div class="plus" style="left:19.4px;top:10.2px"></div><div class="ico" style="left:36.4px;top:6.2px"><svg width="17" height="18" viewBox="0 0 17 18"><path d="M0.8 2.4 L6 0.5 L15.7 2.4 L15.7 12.5 L9.6 16.5 L1 13.6 Z" fill="#e9e9e9" stroke="#3c3c3c" stroke-width="1.25" stroke-linejoin="round"/><path d="M2.4 3.6 V12.7 L9.4 15.1" fill="none" stroke="#fbfbfb" stroke-width="1"/><path d="M3.6 2.6 L7.6 1.1 L15.2 2.5 L11 4.5 Z" fill="#72bde3"/><path d="M3.6 2.6 L11 4.5 L11 11.6 L3.6 9.6 Z" fill="#2f82b3"/><path d="M11 4.5 L15.2 2.5 L15.2 9.6 L11 11.6 Z" fill="#175f8e"/><path d="M4.8 5.6 L9.8 6.9 M12 6.6 L14.4 5.5" stroke="#72bde3" stroke-width="1"/><path d="M3.6 2.6 L11 4.5 L15.2 2.5 M11 4.5 V11.6 M3.6 2.6 V9.6" fill="none" stroke="#0f5480" stroke-width="0.8"/><path d="M11 11.6 L9.8 16.2" stroke="#4a4a4a" stroke-width="0.9"/></svg></div><div class="c" style="left:60px">Sac_Parcasi</div><div class="c" style="left:188.6px">A.1</div><div class="ico" style="left:246.5px;top:5px"><svg width="15" height="15" viewBox="0 0 15 15"><circle cx="10.5" cy="4.4" r="3.4" fill="#52b441"/><circle cx="11.1" cy="3.7" r="0.8" fill="#e8f4e6"/><path d="M8.6 6.4 L2 12.4" stroke="#52b441" stroke-width="2.5" stroke-linecap="round"/><path d="M5.2 9.6 L6.6 11" stroke="#52b441" stroke-width="1.6"/></svg></div><div class="c r" style="right:1097.9px">Oct 20, 2022, 4:33 PM</div><div class="c r" style="right:971.8px">Oct 20, 2022, 4:33 PM</div><div class="c" style="left:578.0px">Osman Guler</div><div class="c" style="left:704.0px">Physical Product</div><div class="c" style="left:831.1px">In Work</div><div class="c" style="left:906.1px">Engineering Definition</div><div class="c" style="left:1033.2px">Com…</div><div class="c" style="left:1073.0px">MONITOR STANT TASARIMI</div><div class="c" style="left:1241.2px">Osman Guler</div><div class="ico" style="left:1420px;top:7.2px"><svg width="13" height="11" viewBox="0 0 13 11"><path d="M1 5.8 L4.5 9.2 L12 1.5" fill="none" stroke="#5cb846" stroke-width="2"/></svg></div><div class="ico" style="left:1502px;top:13px"><svg width="12" height="8" viewBox="0 0 12 8"><path d="M1 1.5 L6 6 L11 1.5" fill="none" stroke="#666" stroke-width="1.4"/></svg></div></div></div><div class="row" style="top:290.50px;background:#ffffff"><div class="in"><div class="plus" style="left:19.4px;top:10.2px"></div><div class="ico" style="left:36.4px;top:6.2px"><svg width="17" height="18" viewBox="0 0 17 18"><path d="M0.8 2.4 L6 0.5 L15.7 2.4 L15.7 12.5 L9.6 16.5 L1 13.6 Z" fill="#e9e9e9" stroke="#3c3c3c" stroke-width="1.25" stroke-linejoin="round"/><path d="M2.4 3.6 V12.7 L9.4 15.1" fill="none" stroke="#fbfbfb" stroke-width="1"/><path d="M3.6 2.6 L7.6 1.1 L15.2 2.5 L11 4.5 Z" fill="#72bde3"/><path d="M3.6 2.6 L11 4.5 L11 11.6 L3.6 9.6 Z" fill="#2f82b3"/><path d="M11 4.5 L15.2 2.5 L15.2 9.6 L11 11.6 Z" fill="#175f8e"/><path d="M4.8 5.6 L9.8 6.9 M12 6.6 L14.4 5.5" stroke="#72bde3" stroke-width="1"/><path d="M3.6 2.6 L11 4.5 L15.2 2.5 M11 4.5 V11.6 M3.6 2.6 V9.6" fill="none" stroke="#0f5480" stroke-width="0.8"/><path d="M11 11.6 L9.8 16.2" stroke="#4a4a4a" stroke-width="0.9"/></svg></div><div class="c" style="left:60px">Baglanti_Elemanı</div><div class="c" style="left:188.6px">A.1</div><div class="ico" style="left:248.5px;top:6px"><svg width="12" height="13" viewBox="0 0 12 13"><path d="M0.5 5.9 H9.6 V12.2 H0.5 Z M4.5 7.6 H5.6 V10.6 H4.5 Z" fill="#b6b7ba" fill-rule="evenodd"/><path d="M4.9 5.9 V3.1 A2.45 2.45 0 0 1 9.8 3.1 V4.7" fill="none" stroke="#b6b7ba" stroke-width="1.4"/></svg></div><div class="c r" style="right:1097.9px">Oct 19, 2022, 5:18 PM</div><div class="c r" style="right:971.8px">Oct 19, 2022, 5:18 PM</div><div class="c" style="left:578.0px">Osman Guler</div><div class="c" style="left:704.0px">Physical Product</div><div class="c" style="left:831.1px">In Work</div><div class="c" style="left:906.1px">Engineering Definition</div><div class="c" style="left:1033.2px">Com…</div><div class="c" style="left:1073.0px">MONITOR STANT TASARIMI</div><div class="ico" style="left:1420px;top:7.2px"><svg width="13" height="11" viewBox="0 0 13 11"><path d="M1 5.8 L4.5 9.2 L12 1.5" fill="none" stroke="#5cb846" stroke-width="2"/></svg></div><div class="ico" style="left:1502px;top:13px"><svg width="12" height="8" viewBox="0 0 12 8"><path d="M1 1.5 L6 6 L11 1.5" fill="none" stroke="#666" stroke-width="1.4"/></svg></div></div></div><div class="row" style="top:321.70px;background:#f3f4f6"><div class="in"><div class="plus" style="left:19.4px;top:10.2px"></div><div class="ico" style="left:36.4px;top:6.2px"><svg width="17" height="18" viewBox="0 0 17 18"><path d="M0.8 2.4 L6 0.5 L15.7 2.4 L15.7 12.5 L9.6 16.5 L1 13.6 Z" fill="#e9e9e9" stroke="#3c3c3c" stroke-width="1.25" stroke-linejoin="round"/><path d="M2.4 3.6 V12.7 L9.4 15.1" fill="none" stroke="#fbfbfb" stroke-width="1"/><path d="M3.6 2.6 L7.6 1.1 L15.2 2.5 L11 4.5 Z" fill="#72bde3"/><path d="M3.6 2.6 L11 4.5 L11 11.6 L3.6 9.6 Z" fill="#2f82b3"/><path d="M11 4.5 L15.2 2.5 L15.2 9.6 L11 11.6 Z" fill="#175f8e"/><path d="M4.8 5.6 L9.8 6.9 M12 6.6 L14.4 5.5" stroke="#72bde3" stroke-width="1"/><path d="M3.6 2.6 L11 4.5 L15.2 2.5 M11 4.5 V11.6 M3.6 2.6 V9.6" fill="none" stroke="#0f5480" stroke-width="0.8"/><path d="M11 11.6 L9.8 16.2" stroke="#4a4a4a" stroke-width="0.9"/></svg></div><div class="c" style="left:60px">Kapak</div><div class="c" style="left:188.6px">A</div><div class="ico" style="left:248.5px;top:6px"><svg width="12" height="13" viewBox="0 0 12 13"><path d="M0.5 5.9 H9.6 V12.2 H0.5 Z M4.5 7.6 H5.6 V10.6 H4.5 Z" fill="#b6b7ba" fill-rule="evenodd"/><path d="M4.9 5.9 V3.1 A2.45 2.45 0 0 1 9.8 3.1 V4.7" fill="none" stroke="#b6b7ba" stroke-width="1.4"/></svg></div><div class="c r" style="right:1097.9px">Oct 21, 2022, 12:03 AM</div><div class="c r" style="right:971.8px">Oct 20, 2022, 2:52 PM</div><div class="c" style="left:578.0px">Osman Guler</div><div class="c" style="left:704.0px">Physical Product</div><div class="c" style="left:831.1px">In Work</div><div class="c" style="left:906.1px">Engineering Definition</div><div class="c" style="left:1033.2px">Com…</div><div class="c" style="left:1073.0px">MONITOR STANT TASARIMI</div><div class="ico" style="left:1420px;top:7.2px"><svg width="13" height="11" viewBox="0 0 13 11"><path d="M1 5.8 L4.5 9.2 L12 1.5" fill="none" stroke="#5cb846" stroke-width="2"/></svg></div><div class="ico" style="left:1502px;top:13px"><svg width="12" height="8" viewBox="0 0 12 8"><path d="M1 1.5 L6 6 L11 1.5" fill="none" stroke="#666" stroke-width="1.4"/></svg></div></div></div><div class="row" style="top:352.90px;background:#ffffff"><div class="in"><div class="plus" style="left:19.4px;top:10.2px"></div><div class="ico" style="left:36.4px;top:6.2px"><svg width="17" height="18" viewBox="0 0 17 18"><path d="M0.8 2.4 L6 0.5 L15.7 2.4 L15.7 12.5 L9.6 16.5 L1 13.6 Z" fill="#e9e9e9" stroke="#3c3c3c" stroke-width="1.25" stroke-linejoin="round"/><path d="M2.4 3.6 V12.7 L9.4 15.1" fill="none" stroke="#fbfbfb" stroke-width="1"/><path d="M3.6 2.6 L7.6 1.1 L15.2 2.5 L11 4.5 Z" fill="#72bde3"/><path d="M3.6 2.6 L11 4.5 L11 11.6 L3.6 9.6 Z" fill="#2f82b3"/><path d="M11 4.5 L15.2 2.5 L15.2 9.6 L11 11.6 Z" fill="#175f8e"/><path d="M4.8 5.6 L9.8 6.9 M12 6.6 L14.4 5.5" stroke="#72bde3" stroke-width="1"/><path d="M3.6 2.6 L11 4.5 L15.2 2.5 M11 4.5 V11.6 M3.6 2.6 V9.6" fill="none" stroke="#0f5480" stroke-width="0.8"/><path d="M11 11.6 L9.8 16.2" stroke="#4a4a4a" stroke-width="0.9"/></svg></div><div class="c" style="left:60px">Tutucu</div><div class="c" style="left:188.6px">A</div><div class="ico" style="left:248.5px;top:6px"><svg width="12" height="13" viewBox="0 0 12 13"><path d="M0.5 5.9 H9.6 V12.2 H0.5 Z M4.5 7.6 H5.6 V10.6 H4.5 Z" fill="#b6b7ba" fill-rule="evenodd"/><path d="M4.9 5.9 V3.1 A2.45 2.45 0 0 1 9.8 3.1 V4.7" fill="none" stroke="#b6b7ba" stroke-width="1.4"/></svg></div><div class="c r" style="right:1097.9px">Oct 21, 2022, 12:01 AM</div><div class="c r" style="right:971.8px">Oct 20, 2022, 2:52 PM</div><div class="c" style="left:578.0px">Osman Guler</div><div class="c" style="left:704.0px">Physical Product</div><div class="c" style="left:831.1px">In Work</div><div class="c" style="left:906.1px">Engineering Definition</div><div class="c" style="left:1033.2px">Com…</div><div class="c" style="left:1073.0px">MONITOR STANT TASARIMI</div><div class="ico" style="left:1420px;top:7.2px"><svg width="13" height="11" viewBox="0 0 13 11"><path d="M1 5.8 L4.5 9.2 L12 1.5" fill="none" stroke="#5cb846" stroke-width="2"/></svg></div><div class="ico" style="left:1502px;top:13px"><svg width="12" height="8" viewBox="0 0 12 8"><path d="M1 1.5 L6 6 L11 1.5" fill="none" stroke="#666" stroke-width="1.4"/></svg></div></div></div><div class="row" style="top:384.10px;background:#d1d4d5"><div class="in"><div class="plus" style="left:19.4px;top:10.2px"></div><div class="ico" style="left:36.4px;top:6.2px"><svg width="17" height="18" viewBox="0 0 17 18"><path d="M0.8 2.4 L6 0.5 L15.7 2.4 L15.7 12.5 L9.6 16.5 L1 13.6 Z" fill="#e9e9e9" stroke="#3c3c3c" stroke-width="1.25" stroke-linejoin="round"/><path d="M2.4 3.6 V12.7 L9.4 15.1" fill="none" stroke="#fbfbfb" stroke-width="1"/><path d="M3.6 2.6 L7.6 1.1 L15.2 2.5 L11 4.5 Z" fill="#72bde3"/><path d="M3.6 2.6 L11 4.5 L11 11.6 L3.6 9.6 Z" fill="#2f82b3"/><path d="M11 4.5 L15.2 2.5 L15.2 9.6 L11 11.6 Z" fill="#175f8e"/><path d="M4.8 5.6 L9.8 6.9 M12 6.6 L14.4 5.5" stroke="#72bde3" stroke-width="1"/><path d="M3.6 2.6 L11 4.5 L15.2 2.5 M11 4.5 V11.6 M3.6 2.6 V9.6" fill="none" stroke="#0f5480" stroke-width="0.8"/><path d="M11 11.6 L9.8 16.2" stroke="#4a4a4a" stroke-width="0.9"/></svg></div><div class="c" style="left:60px">Stant_Ayak</div><div class="c" style="left:188.6px">A</div><div class="ico" style="left:248.5px;top:6px"><svg width="12" height="13" viewBox="0 0 12 13"><path d="M0.5 5.9 H9.6 V12.2 H0.5 Z M4.5 7.6 H5.6 V10.6 H4.5 Z" fill="#b6b7ba" fill-rule="evenodd"/><path d="M4.9 5.9 V3.1 A2.45 2.45 0 0 1 9.8 3.1 V4.7" fill="none" stroke="#b6b7ba" stroke-width="1.4"/></svg></div><div class="c r" style="right:1097.9px">Oct 21, 2022, 12:03 AM</div><div class="c r" style="right:971.8px">Oct 20, 2022, 2:52 PM</div><div class="c" style="left:578.0px">Osman Guler</div><div class="c" style="left:704.0px">Physical Product</div><div class="c" style="left:831.1px">In Work</div><div class="c" style="left:906.1px">Engineering Definition</div><div class="c" style="left:1033.2px">Com…</div><div class="c" style="left:1073.0px">MONITOR STANT TASARIMI</div><div class="ico" style="left:1420px;top:7.2px"><svg width="13" height="11" viewBox="0 0 13 11"><path d="M1 5.8 L4.5 9.2 L12 1.5" fill="none" stroke="#5cb846" stroke-width="2"/></svg></div><div class="ico" style="left:1502px;top:13px"><svg width="12" height="8" viewBox="0 0 12 8"><path d="M1 1.5 L6 6 L11 1.5" fill="none" stroke="#666" stroke-width="1.4"/></svg></div></div></div><div class="row" style="top:415.30px;background:#ffffff"><div class="in"><div class="plus" style="left:19.4px;top:10.2px"></div><div class="ico" style="left:36.4px;top:6.2px"><svg width="17" height="18" viewBox="0 0 17 18"><path d="M0.8 2.4 L6 0.5 L15.7 2.4 L15.7 12.5 L9.6 16.5 L1 13.6 Z" fill="#e9e9e9" stroke="#3c3c3c" stroke-width="1.25" stroke-linejoin="round"/><path d="M2.4 3.6 V12.7 L9.4 15.1" fill="none" stroke="#fbfbfb" stroke-width="1"/><path d="M3.6 2.6 L7.6 1.1 L15.2 2.5 L11 4.5 Z" fill="#72bde3"/><path d="M3.6 2.6 L11 4.5 L11 11.6 L3.6 9.6 Z" fill="#2f82b3"/><path d="M11 4.5 L15.2 2.5 L15.2 9.6 L11 11.6 Z" fill="#175f8e"/><path d="M4.8 5.6 L9.8 6.9 M12 6.6 L14.4 5.5" stroke="#72bde3" stroke-width="1"/><path d="M3.6 2.6 L11 4.5 L15.2 2.5 M11 4.5 V11.6 M3.6 2.6 V9.6" fill="none" stroke="#0f5480" stroke-width="0.8"/><path d="M11 11.6 L9.8 16.2" stroke="#4a4a4a" stroke-width="0.9"/></svg></div><div class="c" style="left:60px">Sac_Baglanti</div><div class="c" style="left:188.6px">A</div><div class="ico" style="left:248.5px;top:6px"><svg width="12" height="13" viewBox="0 0 12 13"><path d="M0.5 5.9 H9.6 V12.2 H0.5 Z M4.5 7.6 H5.6 V10.6 H4.5 Z" fill="#b6b7ba" fill-rule="evenodd"/><path d="M4.9 5.9 V3.1 A2.45 2.45 0 0 1 9.8 3.1 V4.7" fill="none" stroke="#b6b7ba" stroke-width="1.4"/></svg></div><div class="c r" style="right:1097.9px">Oct 21, 2022, 12:00 AM</div><div class="c r" style="right:971.8px">Oct 20, 2022, 2:52 PM</div><div class="c" style="left:578.0px">Osman Guler</div><div class="c" style="left:704.0px">Physical Product</div><div class="c" style="left:831.1px">In Work</div><div class="c" style="left:906.1px">Engineering Definition</div><div class="c" style="left:1033.2px">Com…</div><div class="c" style="left:1073.0px">MONITOR STANT TASARIMI</div><div class="ico" style="left:1420px;top:7.2px"><svg width="13" height="11" viewBox="0 0 13 11"><path d="M1 5.8 L4.5 9.2 L12 1.5" fill="none" stroke="#5cb846" stroke-width="2"/></svg></div><div class="ico" style="left:1502px;top:13px"><svg width="12" height="8" viewBox="0 0 12 8"><path d="M1 1.5 L6 6 L11 1.5" fill="none" stroke="#666" stroke-width="1.4"/></svg></div></div></div><div class="row" style="top:446.50px;background:#f3f4f6"><div class="in"><div class="plus" style="left:19.4px;top:10.2px"></div><div class="ico" style="left:36.4px;top:6.2px"><svg width="17" height="18" viewBox="0 0 17 18"><path d="M0.8 2.4 L6 0.5 L15.7 2.4 L15.7 12.5 L9.6 16.5 L1 13.6 Z" fill="#e9e9e9" stroke="#3c3c3c" stroke-width="1.25" stroke-linejoin="round"/><path d="M2.4 3.6 V12.7 L9.4 15.1" fill="none" stroke="#fbfbfb" stroke-width="1"/><path d="M3.6 2.6 L7.6 1.1 L15.2 2.5 L11 4.5 Z" fill="#72bde3"/><path d="M3.6 2.6 L11 4.5 L11 11.6 L3.6 9.6 Z" fill="#2f82b3"/><path d="M11 4.5 L15.2 2.5 L15.2 9.6 L11 11.6 Z" fill="#175f8e"/><path d="M4.8 5.6 L9.8 6.9 M12 6.6 L14.4 5.5" stroke="#72bde3" stroke-width="1"/><path d="M3.6 2.6 L11 4.5 L15.2 2.5 M11 4.5 V11.6 M3.6 2.6 V9.6" fill="none" stroke="#0f5480" stroke-width="0.8"/><path d="M11 11.6 L9.8 16.2" stroke="#4a4a4a" stroke-width="0.9"/></svg></div><div class="c" style="left:60px">Doner_Baglanti</div><div class="c" style="left:188.6px">A</div><div class="ico" style="left:248.5px;top:6px"><svg width="12" height="13" viewBox="0 0 12 13"><path d="M0.5 5.9 H9.6 V12.2 H0.5 Z M4.5 7.6 H5.6 V10.6 H4.5 Z" fill="#b6b7ba" fill-rule="evenodd"/><path d="M4.9 5.9 V3.1 A2.45 2.45 0 0 1 9.8 3.1 V4.7" fill="none" stroke="#b6b7ba" stroke-width="1.4"/></svg></div><div class="c r" style="right:1097.9px">Oct 21, 2022, 12:01 AM</div><div class="c r" style="right:971.8px">Oct 20, 2022, 2:52 PM</div><div class="c" style="left:578.0px">Osman Guler</div><div class="c" style="left:704.0px">Physical Product</div><div class="c" style="left:831.1px">In Work</div><div class="c" style="left:906.1px">Engineering Definition</div><div class="c" style="left:1033.2px">Com…</div><div class="c" style="left:1073.0px">MONITOR STANT TASARIMI</div><div class="ico" style="left:1420px;top:7.2px"><svg width="13" height="11" viewBox="0 0 13 11"><path d="M1 5.8 L4.5 9.2 L12 1.5" fill="none" stroke="#5cb846" stroke-width="2"/></svg></div><div class="ico" style="left:1502px;top:13px"><svg width="12" height="8" viewBox="0 0 12 8"><path d="M1 1.5 L6 6 L11 1.5" fill="none" stroke="#666" stroke-width="1.4"/></svg></div></div></div><div class="row" style="top:477.70px;background:#ffffff"><div class="in"><div class="plus" style="left:19.4px;top:10.2px"></div><div class="ico" style="left:36.4px;top:6.2px"><svg width="17" height="18" viewBox="0 0 17 18"><path d="M0.8 2.4 L6 0.5 L15.7 2.4 L15.7 12.5 L9.6 16.5 L1 13.6 Z" fill="#e9e9e9" stroke="#3c3c3c" stroke-width="1.25" stroke-linejoin="round"/><path d="M2.4 3.6 V12.7 L9.4 15.1" fill="none" stroke="#fbfbfb" stroke-width="1"/><path d="M3.6 2.6 L7.6 1.1 L15.2 2.5 L11 4.5 Z" fill="#72bde3"/><path d="M3.6 2.6 L11 4.5 L11 11.6 L3.6 9.6 Z" fill="#2f82b3"/><path d="M11 4.5 L15.2 2.5 L15.2 9.6 L11 11.6 Z" fill="#175f8e"/><path d="M4.8 5.6 L9.8 6.9 M12 6.6 L14.4 5.5" stroke="#72bde3" stroke-width="1"/><path d="M3.6 2.6 L11 4.5 L15.2 2.5 M11 4.5 V11.6 M3.6 2.6 V9.6" fill="none" stroke="#0f5480" stroke-width="0.8"/><path d="M11 11.6 L9.8 16.2" stroke="#4a4a4a" stroke-width="0.9"/></svg></div><div class="c" style="left:60px">Ucgen_Montaj</div><div class="c" style="left:188.6px">A</div><div class="ico" style="left:248.5px;top:6px"><svg width="12" height="13" viewBox="0 0 12 13"><path d="M0.5 5.9 H9.6 V12.2 H0.5 Z M4.5 7.6 H5.6 V10.6 H4.5 Z" fill="#b6b7ba" fill-rule="evenodd"/><path d="M4.9 5.9 V3.1 A2.45 2.45 0 0 1 9.8 3.1 V4.7" fill="none" stroke="#b6b7ba" stroke-width="1.4"/></svg></div><div class="c r" style="right:1097.9px">Oct 21, 2022, 12:02 AM</div><div class="c r" style="right:971.8px">Oct 20, 2022, 2:52 PM</div><div class="c" style="left:578.0px">Osman Guler</div><div class="c" style="left:704.0px">Physical Product</div><div class="c" style="left:831.1px">In Work</div><div class="c" style="left:906.1px">Engineering Definition</div><div class="c" style="left:1033.2px">Com…</div><div class="c" style="left:1073.0px">MONITOR STANT TASARIMI</div><div class="ico" style="left:1420px;top:7.2px"><svg width="13" height="11" viewBox="0 0 13 11"><path d="M1 5.8 L4.5 9.2 L12 1.5" fill="none" stroke="#5cb846" stroke-width="2"/></svg></div><div class="ico" style="left:1502px;top:13px"><svg width="12" height="8" viewBox="0 0 12 8"><path d="M1 1.5 L6 6 L11 1.5" fill="none" stroke="#666" stroke-width="1.4"/></svg></div></div></div><div class="row" style="top:508.90px;background:#f3f4f6"><div class="in"><div class="plus" style="left:19.4px;top:10.2px"></div><div class="ico" style="left:36.4px;top:6.2px"><svg width="17" height="18" viewBox="0 0 17 18"><path d="M0.8 2.4 L6 0.5 L15.7 2.4 L15.7 12.5 L9.6 16.5 L1 13.6 Z" fill="#e9e9e9" stroke="#3c3c3c" stroke-width="1.25" stroke-linejoin="round"/><path d="M2.4 3.6 V12.7 L9.4 15.1" fill="none" stroke="#fbfbfb" stroke-width="1"/><path d="M3.6 2.6 L7.6 1.1 L15.2 2.5 L11 4.5 Z" fill="#72bde3"/><path d="M3.6 2.6 L11 4.5 L11 11.6 L3.6 9.6 Z" fill="#2f82b3"/><path d="M11 4.5 L15.2 2.5 L15.2 9.6 L11 11.6 Z" fill="#175f8e"/><path d="M4.8 5.6 L9.8 6.9 M12 6.6 L14.4 5.5" stroke="#72bde3" stroke-width="1"/><path d="M3.6 2.6 L11 4.5 L15.2 2.5 M11 4.5 V11.6 M3.6 2.6 V9.6" fill="none" stroke="#0f5480" stroke-width="0.8"/><path d="M11 11.6 L9.8 16.2" stroke="#4a4a4a" stroke-width="0.9"/></svg></div><div class="c" style="left:60px">Profil_Boru</div><div class="c" style="left:188.6px">A.1</div><div class="ico" style="left:248.5px;top:6px"><svg width="12" height="13" viewBox="0 0 12 13"><path d="M0.5 5.9 H9.6 V12.2 H0.5 Z M4.5 7.6 H5.6 V10.6 H4.5 Z" fill="#b6b7ba" fill-rule="evenodd"/><path d="M4.9 5.9 V3.1 A2.45 2.45 0 0 1 9.8 3.1 V4.7" fill="none" stroke="#b6b7ba" stroke-width="1.4"/></svg></div><div class="c r" style="right:1097.9px">Nov 12, 2022, 10:38 PM</div><div class="c r" style="right:971.8px">Oct 20, 2022, 6:11 PM</div><div class="c" style="left:578.0px">Osman Guler</div><div class="c" style="left:704.0px">Physical Product</div><div class="c" style="left:831.1px">Released</div><div class="c" style="left:906.1px">Engineering Definition</div><div class="c" style="left:1033.2px">Com…</div><div class="c" style="left:1073.0px">MONITOR STANT TASARIMI</div><div class="ico" style="left:1420px;top:7.2px"><svg width="13" height="11" viewBox="0 0 13 11"><path d="M1 5.8 L4.5 9.2 L12 1.5" fill="none" stroke="#5cb846" stroke-width="2"/></svg></div><div class="ico" style="left:1502px;top:13px"><svg width="12" height="8" viewBox="0 0 12 8"><path d="M1 1.5 L6 6 L11 1.5" fill="none" stroke="#666" stroke-width="1.4"/></svg></div></div></div><div class="row" style="top:540.10px;background:#ffffff"><div class="in"><div class="plus" style="left:19.4px;top:10.2px"></div><div class="ico" style="left:36.4px;top:6.2px"><svg width="17" height="18" viewBox="0 0 17 18"><path d="M0.8 2.4 L6 0.5 L15.7 2.4 L15.7 12.5 L9.6 16.5 L1 13.6 Z" fill="#e9e9e9" stroke="#3c3c3c" stroke-width="1.25" stroke-linejoin="round"/><path d="M2.4 3.6 V12.7 L9.4 15.1" fill="none" stroke="#fbfbfb" stroke-width="1"/><path d="M3.6 2.6 L7.6 1.1 L15.2 2.5 L11 4.5 Z" fill="#72bde3"/><path d="M3.6 2.6 L11 4.5 L11 11.6 L3.6 9.6 Z" fill="#2f82b3"/><path d="M11 4.5 L15.2 2.5 L15.2 9.6 L11 11.6 Z" fill="#175f8e"/><path d="M4.8 5.6 L9.8 6.9 M12 6.6 L14.4 5.5" stroke="#72bde3" stroke-width="1"/><path d="M3.6 2.6 L11 4.5 L15.2 2.5 M11 4.5 V11.6 M3.6 2.6 V9.6" fill="none" stroke="#0f5480" stroke-width="0.8"/><path d="M11 11.6 L9.8 16.2" stroke="#4a4a4a" stroke-width="0.9"/></svg></div><div class="c" style="left:60px">Ayak_Kapagi</div><div class="c" style="left:188.6px">A.1</div><div class="ico" style="left:248.5px;top:6px"><svg width="12" height="13" viewBox="0 0 12 13"><path d="M0.5 5.9 H9.6 V12.2 H0.5 Z M4.5 7.6 H5.6 V10.6 H4.5 Z" fill="#b6b7ba" fill-rule="evenodd"/><path d="M4.9 5.9 V3.1 A2.45 2.45 0 0 1 9.8 3.1 V4.7" fill="none" stroke="#b6b7ba" stroke-width="1.4"/></svg></div><div class="c r" style="right:1097.9px">Oct 21, 2022, 4:06 PM</div><div class="c r" style="right:971.8px">Oct 21, 2022, 4:06 PM</div><div class="c" style="left:578.0px">Osman Guler</div><div class="c" style="left:704.0px">Physical Product</div><div class="c" style="left:831.1px">In Work</div><div class="c" style="left:906.1px">Engineering Definition</div><div class="c" style="left:1033.2px">Com…</div><div class="c" style="left:1073.0px">MONITOR STANT TASARIMI</div><div class="ico" style="left:1420px;top:7.2px"><svg width="13" height="11" viewBox="0 0 13 11"><path d="M1 5.8 L4.5 9.2 L12 1.5" fill="none" stroke="#5cb846" stroke-width="2"/></svg></div><div class="ico" style="left:1502px;top:13px"><svg width="12" height="8" viewBox="0 0 12 8"><path d="M1 1.5 L6 6 L11 1.5" fill="none" stroke="#666" stroke-width="1.4"/></svg></div></div></div><div class="row" style="top:571.30px;background:#f3f4f6"><div class="in"><div class="blur" style="left:36px;top:6px;width:16px;height:19px;background:#d8d8d8;filter:blur(2.5px)"></div><div class="blur" style="left:62px;top:11.5px;width:34px;height:7px;background:#c4c4c4;filter:blur(2.5px)"></div><div class="c" style="left:188.6px">A.1</div><div class="ico" style="left:248.5px;top:6px"><svg width="12" height="13" viewBox="0 0 12 13"><path d="M0.5 5.9 H9.6 V12.2 H0.5 Z M4.5 7.6 H5.6 V10.6 H4.5 Z" fill="#b6b7ba" fill-rule="evenodd"/><path d="M4.9 5.9 V3.1 A2.45 2.45 0 0 1 9.8 3.1 V4.7" fill="none" stroke="#b6b7ba" stroke-width="1.4"/></svg></div><div class="blur" style="left:280px;top:12px;width:36px;height:7px;background:#cfcfcf;filter:blur(2.5px)"></div><div class="c r" style="right:1097.9px">Nov 12, 2022, 11:08 PM</div><div class="c r" style="right:971.8px">Nov 11, 2022, 10:28 PM</div><div class="c" style="left:578.0px">Osman Guler</div><div class="c" style="left:704.0px">XCADTemplate</div><div class="c" style="left:831.1px">Released</div><div class="c" style="left:906.1px">Engineering Resource</div><div class="c" style="left:1033.2px">Com…</div><div class="blur" style="left:1073px;top:12px;width:29px;height:7px;background:#c9c9c9;filter:blur(2.5px)"></div><div class="ico" style="left:1420px;top:7.2px"><svg width="13" height="11" viewBox="0 0 13 11"><path d="M1 5.8 L4.5 9.2 L12 1.5" fill="none" stroke="#5cb846" stroke-width="2"/></svg></div><div class="ico" style="left:1502px;top:13px"><svg width="12" height="8" viewBox="0 0 12 8"><path d="M1 1.5 L6 6 L11 1.5" fill="none" stroke="#666" stroke-width="1.4"/></svg></div></div></div><div class="row" style="top:602.50px;background:#ffffff"><div class="in"><div class="blur" style="left:10px;top:2px;width:172px;height:27px;background:#fafafa;filter:blur(3px)"></div><div class="blur" style="left:37px;top:8px;width:14px;height:16px;background:#dadada;filter:blur(3px)"></div><div class="blur" style="left:62px;top:12.5px;width:108px;height:6.5px;background:#c6c6c6;filter:blur(2.6px)"></div><div class="c" style="left:188.6px">C.1</div><div class="ico" style="left:248.5px;top:6px"><svg width="12" height="13" viewBox="0 0 12 13"><path d="M0.5 5.9 H9.6 V12.2 H0.5 Z M4.5 7.6 H5.6 V10.6 H4.5 Z" fill="#b6b7ba" fill-rule="evenodd"/><path d="M4.9 5.9 V3.1 A2.45 2.45 0 0 1 9.8 3.1 V4.7" fill="none" stroke="#b6b7ba" stroke-width="1.4"/></svg></div><div class="c r" style="right:1097.9px">Nov 11, 2022, 6:19 PM</div><div class="c r" style="right:971.8px">Nov 11, 2022, 3:23 PM</div><div class="c" style="left:578.0px">Onur Kokbas</div><div class="c" style="left:704.0px">XCADTemplate</div><div class="c" style="left:831.1px">Released</div><div class="c" style="left:906.1px">Engineering Resource</div><div class="c" style="left:1033.2px">Com…</div><div class="blur" style="left:1073px;top:12px;width:36px;height:7px;background:#c9c9c9;filter:blur(2.5px)"></div><div class="ico" style="left:1421px;top:9.5px"><svg width="12" height="12" viewBox="0 0 12 12"><path d="M1.5 1.5 L10.5 10.5 M10.5 1.5 L1.5 10.5" fill="none" stroke="#e2472e" stroke-width="1.9"/></svg></div><div class="ico" style="left:1502px;top:13px"><svg width="12" height="8" viewBox="0 0 12 8"><path d="M1 1.5 L6 6 L11 1.5" fill="none" stroke="#666" stroke-width="1.4"/></svg></div></div></div></div>
<div class="abs" style="left:1068px;top:589px;width:74px;height:22px;background:rgba(255,255,255,0.3);filter:blur(2px)"></div>
<div class="abs" style="left:181.9px;top:165px;width:1.6px;height:548px;background:#d0d2d6"></div>
<div class="abs" style="left:1489.2px;top:165px;width:1.6px;height:548px;background:#d0d2d6"></div>
<div class="abs" style="left:1535px;top:68px;width:1px;height:654px;background:#ececec"></div>
<div class="abs" style="left:9.6px;top:165.5px;width:173.4px;height:30.6px;border:1.3px solid #5aa0d4"></div>
<svg class="abs" style="left:0;top:0;z-index:10" width="1536" height="722" viewBox="0 0 1536 722">
<defs>
 <linearGradient id="ag1" gradientUnits="userSpaceOnUse" x1="1316" y1="135" x2="1282" y2="203">
  <stop offset="0" stop-color="#f41010" stop-opacity="1"/>
  <stop offset="0.3" stop-color="#ef1c1c" stop-opacity="0.95"/>
  <stop offset="1" stop-color="#e83030" stop-opacity="0.05"/>
 </linearGradient>
 <linearGradient id="ag2" gradientUnits="userSpaceOnUse" x1="1352" y1="135" x2="1380" y2="199">
  <stop offset="0" stop-color="#f41010" stop-opacity="1"/>
  <stop offset="0.3" stop-color="#ef1c1c" stop-opacity="0.95"/>
  <stop offset="1" stop-color="#e83030" stop-opacity="0.05"/>
 </linearGradient>
 <filter id="sh" x="-50%" y="-50%" width="200%" height="200%">
  <feGaussianBlur in="SourceAlpha" stdDeviation="2.2"/>
  <feOffset dx="1" dy="2" result="b"/>
  <feComponentTransfer><feFuncA type="linear" slope="0.42"/></feComponentTransfer>
  <feMerge><feMergeNode/><feMergeNode in="SourceGraphic"/></feMerge>
 </filter>
</defs>
<g filter="url(#sh)">
 <path d="M1315.5 127.5 L1293.7 138 L1298.4 140.5 L1281.8 202.8 L1316 148 L1322.9 150.5 Z" fill="url(#ag1)"/>
 <path d="M1349.3 126.8 L1371.1 137.4 L1366.1 139.9 L1379.8 198.5 L1348 146.8 L1341.8 149.9 Z" fill="url(#ag2)"/>
</g>
<g filter="url(#sh)" font-family="Liberation Sans" font-weight="bold" font-size="20.8" fill="#ff0000">
 <text x="1245.8" y="217.9">Temizle</text>
 <text x="1369.6" y="217.9">Sil</text>
</g>
</svg>
<div class="abs" style="left:1508.9px;top:684.3px;width:11.3px;height:11.3px;border-radius:50%;background:#3a3a3a"><div class="abs" style="left:4.75px;top:4.3px;width:1.9px;height:5px;background:#fff"></div><div class="abs" style="left:4.75px;top:1.9px;width:1.9px;height:1.9px;border-radius:50%;background:#fff"></div></div>
</body></html>
